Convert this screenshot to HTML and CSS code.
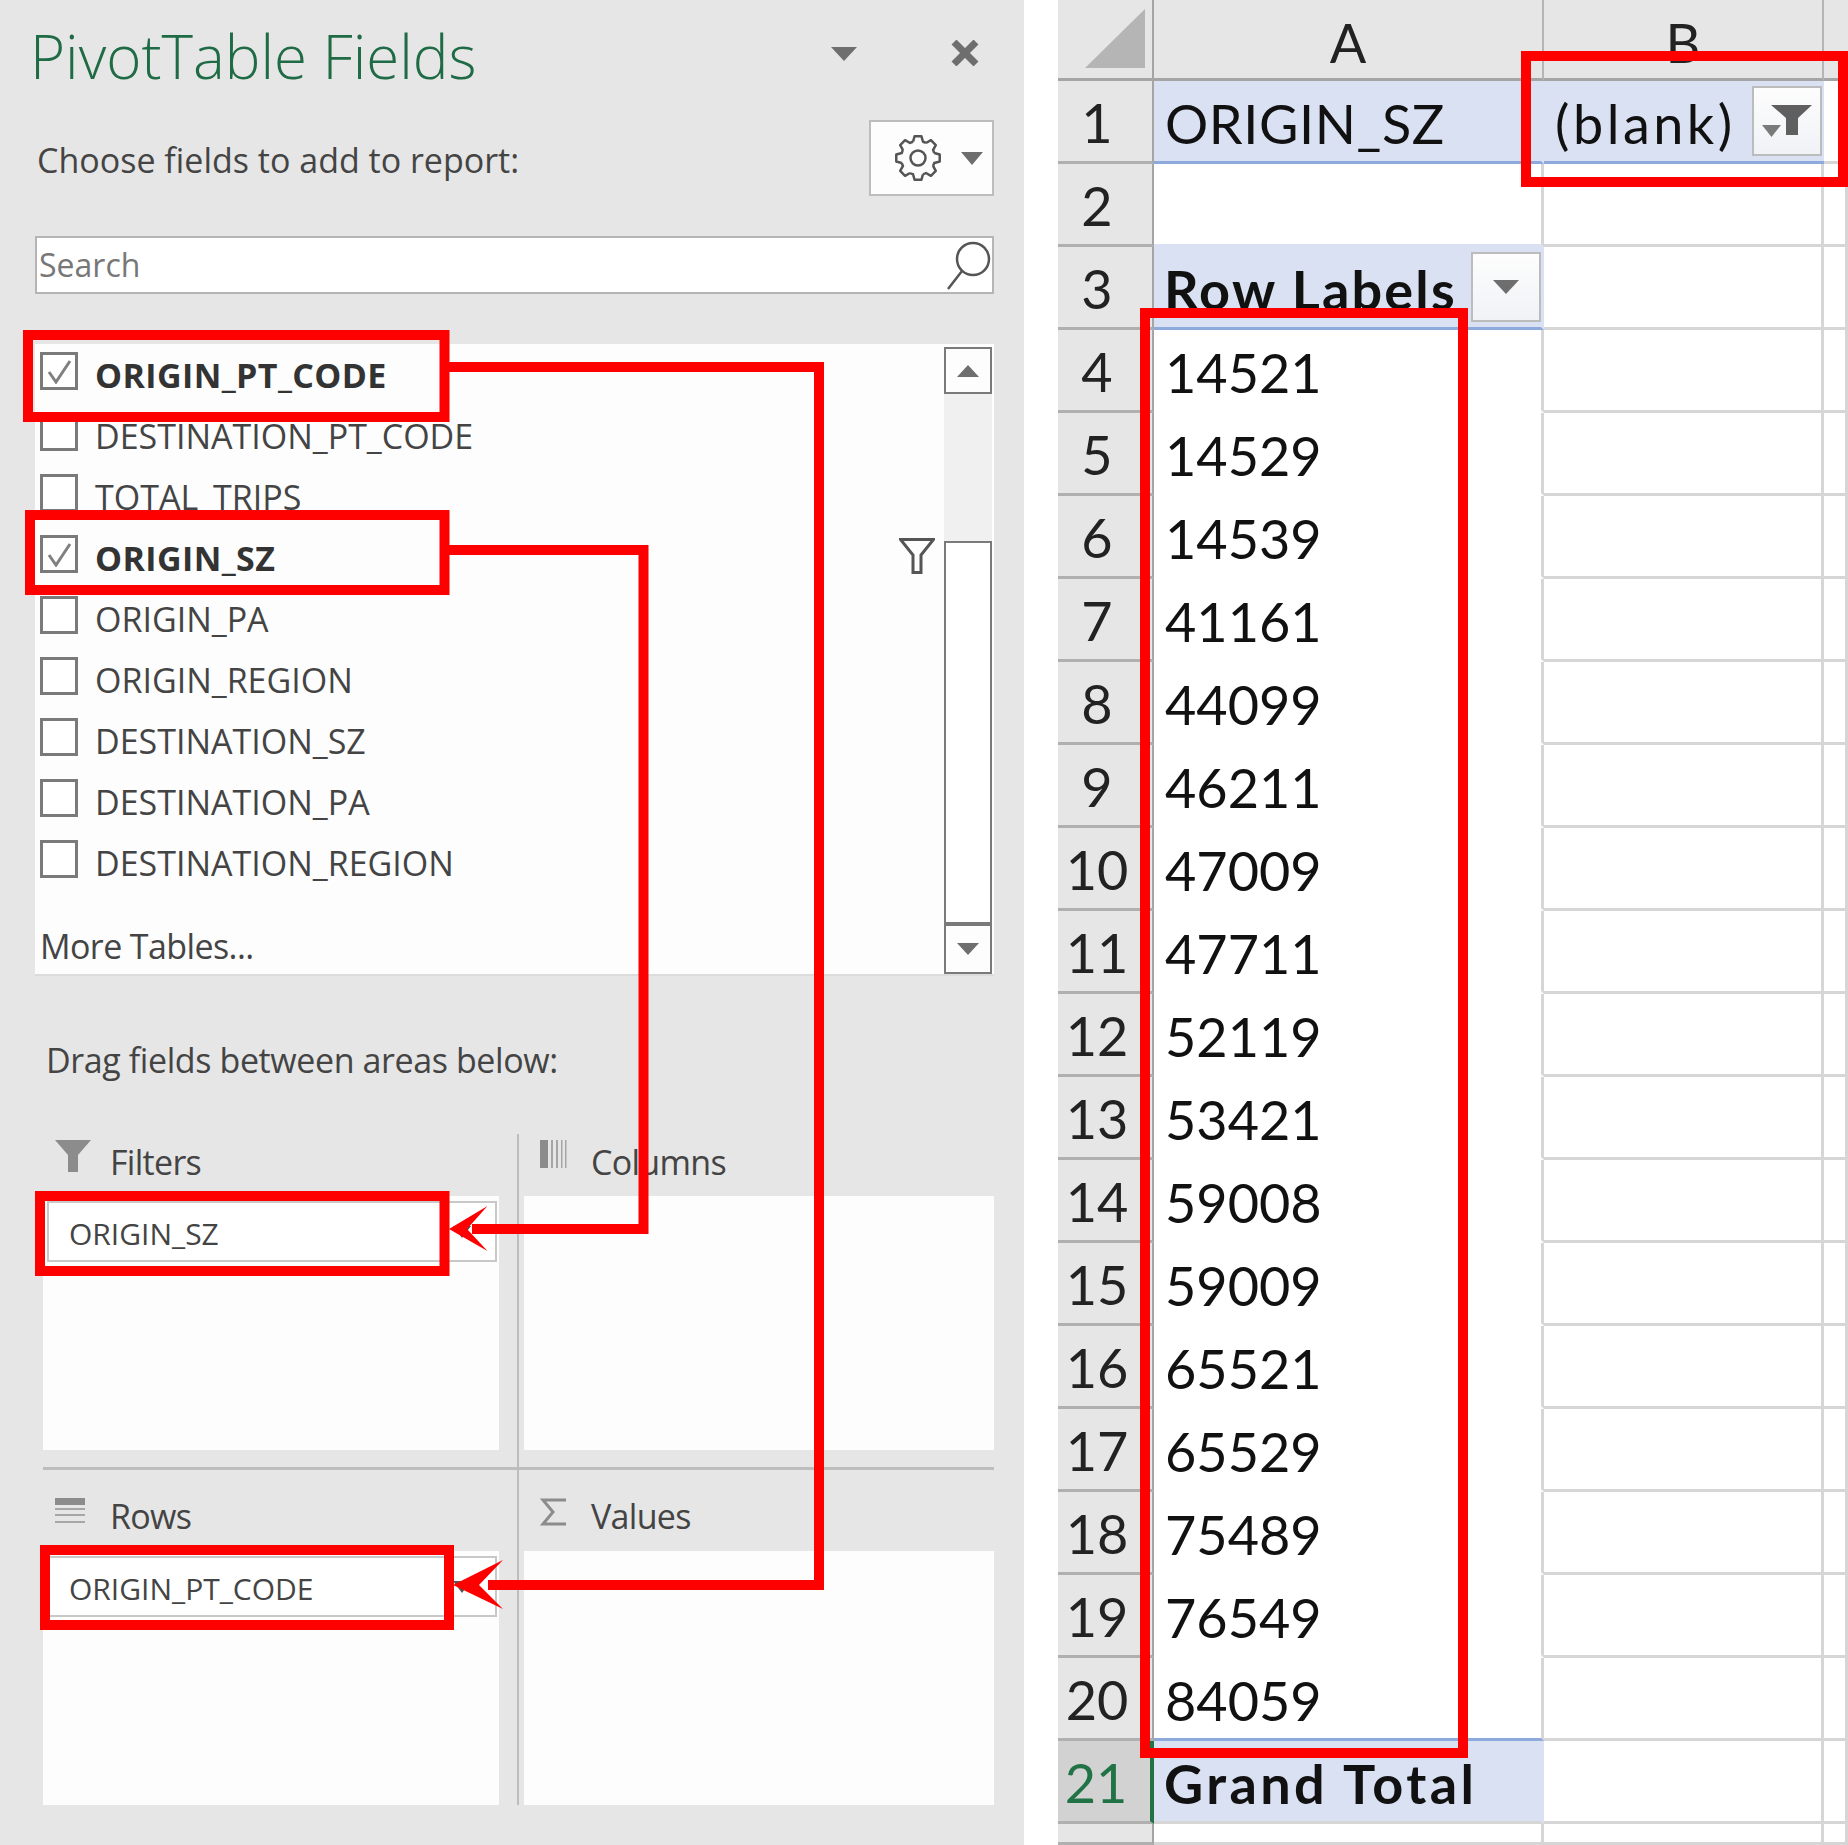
FILE: index.html
```html
<!DOCTYPE html>
<html lang="en">
<head>
    <meta charset="UTF-8" />
    <title>PivotTable Fields</title>
    <link rel="stylesheet" href="styles.css">
</head>
<body>
<svg width="0" height="0" class="defs">
    <defs>
        <path id="gearTooth" d="M19.03 7.74L20.56 2.27H27.44L28.97 7.74A17 17 0 0 1 31.98 8.99" />
    </defs>
</svg>

<aside class="panel">
    <header class="panel-head">
        <h1 class="panel-title">PivotTable Fields</h1>
        <svg class="icon-menu" width="26" height="14" viewBox="0 0 26 14"><path d="M0 0H26L13 14Z" /></svg>
        <svg class="icon-close" width="28" height="26" viewBox="0 0 28 26"><path d="M3 2L25 24M25 2L3 24" /></svg>
    </header>

    <div class="choose-row">
        <span>Choose fields to add to report:</span>
        <div class="gear-btn">
            <svg width="50" height="48" viewBox="0 0 48 48" class="icon-gear">
                <use href="#gearTooth" />
                <use href="#gearTooth" transform="rotate(45 24 24)" />
                <use href="#gearTooth" transform="rotate(90 24 24)" />
                <use href="#gearTooth" transform="rotate(135 24 24)" />
                <use href="#gearTooth" transform="rotate(180 24 24)" />
                <use href="#gearTooth" transform="rotate(225 24 24)" />
                <use href="#gearTooth" transform="rotate(270 24 24)" />
                <use href="#gearTooth" transform="rotate(315 24 24)" />
                <circle cx="24" cy="24" r="7.5" />
            </svg>
            <svg class="tri" width="22" height="13" viewBox="0 0 22 13"><path d="M0 0H22L11 13Z" /></svg>
        </div>
    </div>

    <div class="search-box">
        <span>Search</span>
        <svg width="46" height="52" viewBox="0 0 46 52" class="icon-search"><circle cx="28" cy="20" r="16" /><path d="M17 32L3 50" /></svg>
    </div>

    <div class="field-list">
        <div class="fields">
            <div class="field checked"><span class="box"><svg width="26" height="26" viewBox="0 0 26 26"><path d="M3 14L10 24L24 3" /></svg></span>ORIGIN_PT_CODE</div>
            <div class="field"><span class="box"></span>DESTINATION_PT_CODE</div>
            <div class="field"><span class="box"></span>TOTAL_TRIPS</div>
            <div class="field checked"><span class="box"><svg width="26" height="26" viewBox="0 0 26 26"><path d="M3 14L10 24L24 3" /></svg></span>ORIGIN_SZ</div>
            <div class="field"><span class="box"></span>ORIGIN_PA</div>
            <div class="field"><span class="box"></span>ORIGIN_REGION</div>
            <div class="field"><span class="box"></span>DESTINATION_SZ</div>
            <div class="field"><span class="box"></span>DESTINATION_PA</div>
            <div class="field"><span class="box"></span>DESTINATION_REGION</div>
            <div class="more-tables">More Tables...</div>
        </div>
        <svg class="icon-list-filter" width="36" height="36" viewBox="0 0 36 36"><path d="M1.5 1.5H34.5L22 17V34.5H14V17Z" /></svg>
        <div class="scrollbar">
            <div class="scroll-btn"><svg width="22" height="12" viewBox="0 0 22 12"><path d="M11 0L22 12H0Z" /></svg></div>
            <div class="scroll-track"></div>
            <div class="scroll-thumb"></div>
            <div class="scroll-btn down"><svg width="22" height="12" viewBox="0 0 22 12"><path d="M0 0H22L11 12Z" /></svg></div>
        </div>
    </div>

    <p class="drag-label">Drag fields between areas below:</p>

    <div class="areas">
        <section class="area left top">
            <div class="area-head">
                <svg width="36" height="32" viewBox="0 0 36 32"><path d="M0 0H36L23 15V32H13V15Z" fill="#8c8c8c" /></svg>
                <span>Filters</span>
            </div>
            <div class="area-box">
                <div class="pill">ORIGIN_SZ<i class="pill-arrow"></i></div>
            </div>
        </section>
        <section class="area right top">
            <div class="area-head">
                <svg width="27" height="28" viewBox="0 0 27 28"><path d="M0 0H8V28H0Z" fill="#8c8c8c" /><path d="M11 0H13V28H11ZM16 0H18V28H16ZM21 0H22.5V28H21ZM25 0H26.5V28H25Z" fill="#a6a6a6" /></svg>
                <span>Columns</span>
            </div>
            <div class="area-box"></div>
        </section>
        <section class="area left">
            <div class="area-head">
                <svg width="30" height="26" viewBox="0 0 30 26"><path d="M0 0H30V7H0Z" fill="#8c8c8c" /><path d="M0 10H30V12H0ZM0 16H30V18H0ZM0 23H30V25H0Z" fill="#a6a6a6" /></svg>
                <span>Rows</span>
            </div>
            <div class="area-box">
                <div class="pill">ORIGIN_PT_CODE<i class="pill-arrow"></i></div>
            </div>
        </section>
        <section class="area right">
            <div class="area-head">
                <svg width="27" height="29" viewBox="0 0 27 29"><path d="M26 2H3L13 14L3 26H26" fill="none" stroke="#8c8c8c" stroke-width="3" /></svg>
                <span>Values</span>
            </div>
            <div class="area-box"></div>
        </section>
    </div>
</aside>

<main class="sheet">
    <div class="corner"><svg width="60" height="59" viewBox="0 0 60 59"><path d="M60 0V59H0Z" /></svg></div>
    <div class="col-head">A</div>
    <div class="col-head">B</div>
    <div class="col-head end"></div>

    <div class="row-num">1</div>
    <div class="cell band head sz-cell">ORIGIN_SZ</div>
    <div class="cell band head no-line blank-cell">(blank)
        <div class="drop-btn">
            <svg width="50" height="32" viewBox="0 0 50 32"><path d="M9 0H50L36 13V30H24V13Z" fill="#5f5f5f" /><path d="M0 20H19L9.5 32Z" fill="#7a7a7a" /></svg>
        </div>
    </div>
    <div class="cell"></div>

    <div class="row-num">2</div>
    <div class="cell above-band"></div><div class="cell"></div><div class="cell"></div>

    <div class="row-num">3</div>
    <div class="cell band head bold labels-cell">Row Labels
        <div class="drop-btn"><svg width="26" height="14" viewBox="0 0 26 14"><path d="M0 0H26L13 14Z" fill="#6e6e6e" /></svg></div>
    </div>
    <div class="cell"></div><div class="cell"></div>

    <div class="row-num">4</div><div class="cell value">14521</div><div class="cell"></div><div class="cell"></div>
    <div class="row-num">5</div><div class="cell value">14529</div><div class="cell"></div><div class="cell"></div>
    <div class="row-num">6</div><div class="cell value">14539</div><div class="cell"></div><div class="cell"></div>
    <div class="row-num">7</div><div class="cell value">41161</div><div class="cell"></div><div class="cell"></div>
    <div class="row-num">8</div><div class="cell value">44099</div><div class="cell"></div><div class="cell"></div>
    <div class="row-num">9</div><div class="cell value">46211</div><div class="cell"></div><div class="cell"></div>
    <div class="row-num">10</div><div class="cell value">47009</div><div class="cell"></div><div class="cell"></div>
    <div class="row-num">11</div><div class="cell value">47711</div><div class="cell"></div><div class="cell"></div>
    <div class="row-num">12</div><div class="cell value">52119</div><div class="cell"></div><div class="cell"></div>
    <div class="row-num">13</div><div class="cell value">53421</div><div class="cell"></div><div class="cell"></div>
    <div class="row-num">14</div><div class="cell value">59008</div><div class="cell"></div><div class="cell"></div>
    <div class="row-num">15</div><div class="cell value">59009</div><div class="cell"></div><div class="cell"></div>
    <div class="row-num">16</div><div class="cell value">65521</div><div class="cell"></div><div class="cell"></div>
    <div class="row-num">17</div><div class="cell value">65529</div><div class="cell"></div><div class="cell"></div>
    <div class="row-num">18</div><div class="cell value">75489</div><div class="cell"></div><div class="cell"></div>
    <div class="row-num">19</div><div class="cell value">76549</div><div class="cell"></div><div class="cell"></div>
    <div class="row-num">20</div><div class="cell head">84059</div><div class="cell"></div><div class="cell"></div>

    <div class="row-num active">21</div>
    <div class="cell band bold total-cell">Grand Total</div>
    <div class="cell"></div><div class="cell"></div>

    <div class="row-num"></div><div class="cell"></div><div class="cell"></div><div class="cell"></div>
</main>

<!-- red callouts drawn over the screenshot -->
<svg class="callouts" width="1848" height="1845" viewBox="0 0 1848 1845">
    <rect x="28" y="335" width="416.5" height="82" />
    <rect x="30" y="515" width="414.5" height="75" />
    <rect x="40" y="1196" width="404.5" height="75" />
    <rect x="45" y="1550" width="404" height="75" />
    <rect x="1526" y="56" width="317" height="126" />
    <rect x="1145" y="313" width="318" height="1440" />
    <polyline points="444,367 819,367 819,1585 488,1585" />
    <polyline points="444,550 643.5,550 643.5,1229 472,1229" />
    <polygon points="453,1585 503,1560 479,1585 503,1609" />
    <polygon points="449,1229 487.5,1206 467,1229 487.5,1251" />
</svg>
</body>
</html>
```

FILE: styles.css
```css
* {
    box-sizing: border-box;
}

body {
    margin: 0;
    width: 1848px;
    height: 1845px;
    overflow: hidden;
    position: relative;
    display: flex;
    background: white;
    font-family: "Open Sans", "Noto Sans", sans-serif;
    color: #444;
}

.defs {
    position: absolute;
}

/* left task pane */
.panel {
    width: 1024px;
    height: 1845px;
    margin-right: 34px;
    background: #e6e6e6;
    font-size: 34px;
}

.panel-head {
    height: 120px;
    position: relative;
    display: flex;
    align-items: flex-start;
    padding-left: 30px;
}

.panel-title {
    margin: 14px 0 0;
    font-size: 60px;
    line-height: 84px;
    font-weight: 300;
    color: #1e6b45;
}

.icon-menu {
    margin: 47px 0 0 auto;
    fill: #6e6e6e;
}

.icon-close {
    margin: 40px 45px 0 94px;
    fill: none;
    stroke: #6e6e6e;
    stroke-width: 7;
}

.choose-row {
    height: 76px;
    display: flex;
    align-items: center;
    justify-content: space-between;
    padding: 0 30px 0 37px;
}

.choose-row span {
    padding-top: 4px;
}

.gear-btn {
    width: 125px;
    height: 76px;
    background: #fdfdfd;
    border: 2px solid #bdbdbd;
    display: flex;
    align-items: center;
    padding-left: 22px;
    gap: 18px;
}

.icon-gear use,
.icon-gear circle {
    fill: none;
    stroke: #555;
    stroke-width: 2.5;
    stroke-linejoin: round;
}

.tri {
    fill: #6e6e6e;
}

.search-box {
    height: 58px;
    margin: 40px 30px 0 35px;
    background: white;
    border: 2px solid #b5b5b5;
    display: flex;
    align-items: center;
    justify-content: space-between;
    padding: 0 0 0 2px;
    color: #777;
    font-size: 32px;
}

.search-box span {
    margin-top: -2px;
}

.icon-search {
    fill: none;
    stroke: #555;
    stroke-width: 2.5;
    margin-right: 1px;
}

.field-list {
    height: 632px;
    margin: 50px 30px 0 35px;
    background: #fdfdfd;
    border-bottom: 2px solid #dcdcdc;
    display: flex;
}

.fields {
    flex: 1;
    padding: 8px 0 0 5px;
}

.field {
    height: 61px;
    display: flex;
    align-items: flex-start;
    gap: 17px;
    line-height: 47px;
}

.field.checked {
    font-weight: 700;
    color: #333;
    letter-spacing: 0.4px;
}

.box {
    width: 38px;
    height: 38px;
    flex: none;
    background: white;
    border: 3px solid #7a7a7a;
    display: flex;
    align-items: center;
    justify-content: center;
}

.box svg {
    fill: none;
    stroke: #808080;
    stroke-width: 3;
}

.more-tables {
    margin-top: 24px;
    line-height: 42px;
    letter-spacing: -0.6px;
}

.icon-list-filter {
    margin: 194px 9px 0 0;
    fill: none;
    stroke: #555;
    stroke-width: 3;
}

.scrollbar {
    width: 48px;
    margin: 3px 2px 0 0;
    display: flex;
    flex-direction: column;
}

.scroll-btn {
    height: 47px;
    background: #fdfdfd;
    border: 2px solid #7a7a7a;
    display: flex;
    align-items: center;
    justify-content: center;
    fill: #6e6e6e;
}

.scroll-btn.down {
    height: 50px;
}

.scroll-track {
    height: 147px;
    background: #f0f0f0;
}

.scroll-thumb {
    height: 383px;
    background: white;
    border: 2px solid #7a7a7a;
}

.drag-label {
    margin: 62px 0 0 46px;
    line-height: 44px;
    letter-spacing: -0.4px;
}

.areas {
    margin: 52px 30px 0 43px;
    display: grid;
    grid-template-columns: 476px 475px;
}

.area.top {
    border-bottom: 3px solid #bdbdbd;
    height: 336px;
}

.area.left {
    padding-right: 18px;
    border-right: 2px solid #bdbdbd;
}

.area.right {
    padding-left: 5px;
}

.area-head {
    height: 62px;
    display: flex;
    align-items: flex-start;
    position: relative;
    padding-left: 12px;
    gap: 20px;
}

.area:not(.top) .area-head {
    height: 81px;
    padding-top: 28px;
}

.area-head span {
    position: absolute;
    left: 67px;
    bottom: 12px;
    line-height: 44px;
    letter-spacing: -0.7px;
}

.area:not(.top) .area-head span {
    bottom: 13px;
}

.area.right .area-head {
    padding-left: 16px;
}

.area.top .area-head {
    padding-top: 6px;
}

.area-box {
    height: 254px;
    background: #fdfdfd;
    padding: 5px 2px 0 4px;
}

.pill {
    height: 61px;
    background: white;
    border: 2px solid #c8c8c8;
    padding-left: 20px;
    font-size: 30px;
    line-height: 62px;
    position: relative;
}

.pill-arrow {
    position: absolute;
    left: 404px;
    top: 23px;
    border-top: 12px solid #555;
    border-left: 9px solid transparent;
    border-right: 9px solid transparent;
}

/* spreadsheet */
.sheet {
    width: 790px;
    height: 1845px;
    display: grid;
    grid-template-columns: 96px 390px 280px 24px;
    grid-template-rows: 81px repeat(21, 83px) 21px;
    font-family: Lato, "Liberation Sans", sans-serif;
    font-size: 54px;
    color: #111;
}

.corner {
    background: #e6e6e6;
    border-right: 2px solid #a5a5a5;
    border-bottom: 3px solid #a5a5a5;
    display: flex;
    padding: 9px 0 0 27px;
}

.corner path {
    fill: #b5b5b5;
}

.col-head {
    background: #e6e6e6;
    border-right: 2px solid #b5b5b5;
    border-bottom: 3px solid #a5a5a5;
    text-align: center;
    line-height: 85px;
    color: #222;
}

.col-head.end {
    border-right: none;
}

.row-num {
    background: #e6e6e6;
    border-right: 2px solid #a5a5a5;
    border-bottom: 3px solid #b0b0b0;
    padding-right: 16px;
    text-align: center;
    line-height: 84px;
    color: #222;
}

.row-num.active {
    background: #d2d2d2;
    color: #217346;
    border-right: 4px solid #217346;
}

.cell {
    border-right: 3px solid #d6d6d6;
    border-bottom: 3px solid #d6d6d6;
    padding: 5px 0 0 11px;
    display: flex;
    align-items: center;
    justify-content: space-between;
    line-height: 78px;
}

/* pivot row cells have no gridline under them */
.cell.value {
    border-bottom-color: white;
}

.cell.above-band {
    border-bottom-color: #d9e1f2;
}

.cell.band {
    background: #d9e1f2;
    border-right-color: #d9e1f2;
}

.cell.head {
    border-bottom-color: #8ea9db;
}

.cell.no-line {
    border-right: none;
}

.cell.bold {
    font-weight: 700;
    padding-left: 10px;
}

.sz-cell {
    letter-spacing: 0.6px;
}

.blank-cell {
    padding-right: 2px;
    letter-spacing: 3.5px;
}

.labels-cell {
    letter-spacing: 2.2px;
}

.total-cell {
    letter-spacing: 3.4px;
}

.drop-btn {
    width: 70px;
    height: 70px;
    flex: none;
    margin-top: -5px;
    background: linear-gradient(#fdfdfd, #f0f2f6);
    border: 2px solid #bcbcbc;
    display: flex;
    align-items: center;
    justify-content: center;
}

/* annotations */
.callouts {
    position: absolute;
    top: 0;
    left: 0;
    pointer-events: none;
}

.callouts rect,
.callouts polyline {
    fill: none;
    stroke: #ff0000;
    stroke-width: 10;
}

.callouts polygon {
    fill: #ff0000;
}
```
